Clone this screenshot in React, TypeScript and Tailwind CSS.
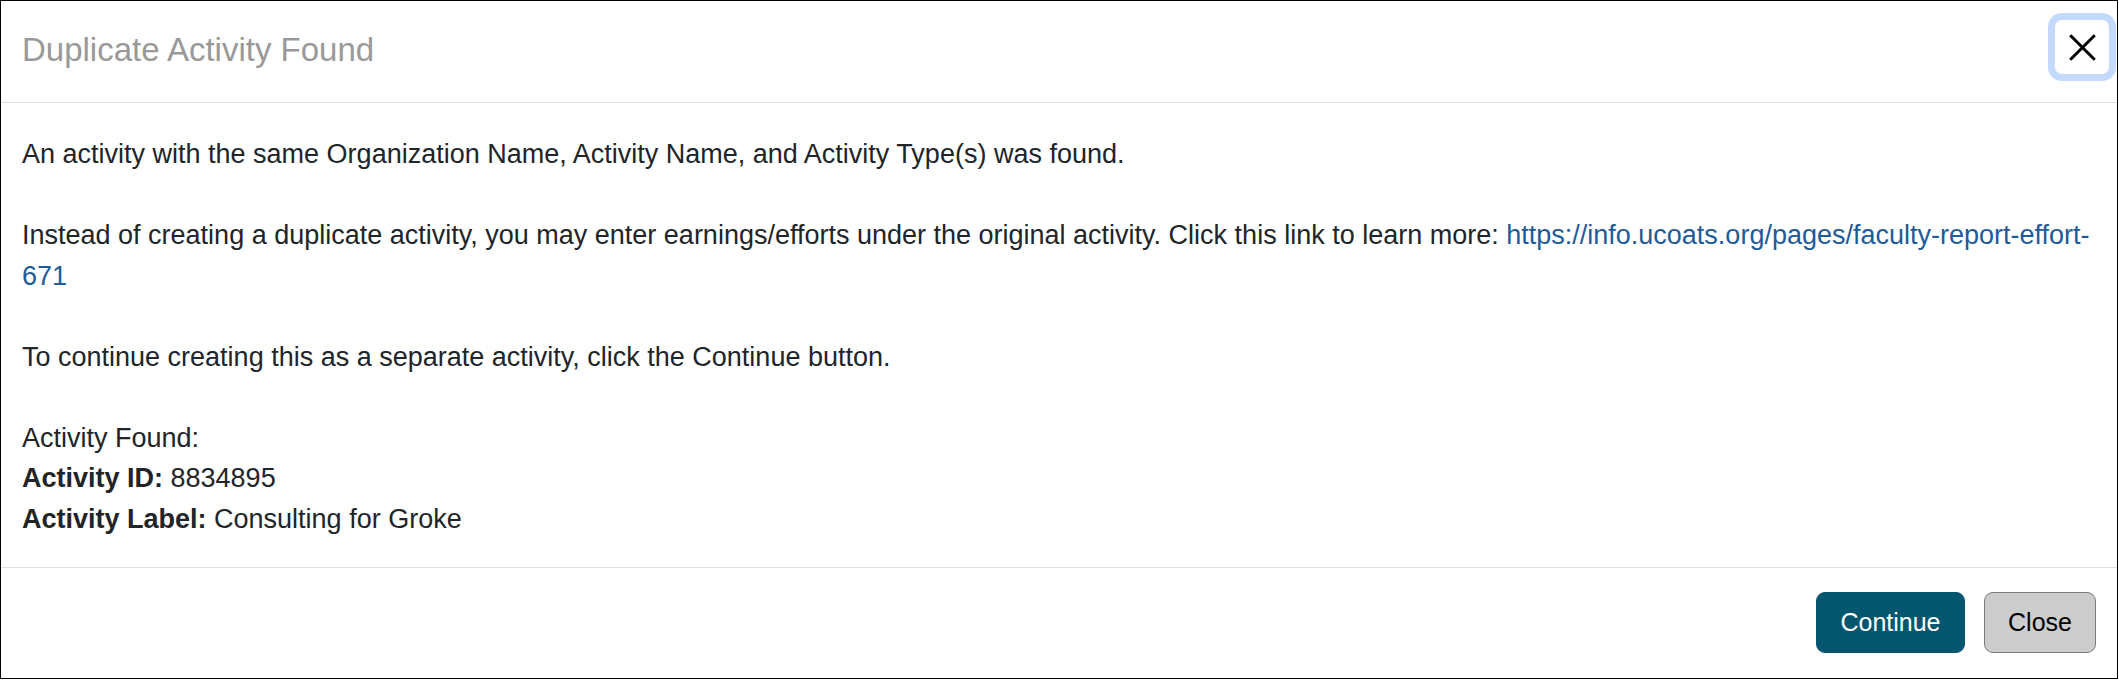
export default function App() {
    return (
        <div className="w-[2118px] h-[679px] bg-white border border-black flex flex-col font-['Liberation_Sans',Arial,sans-serif] text-[#212529]">

            {/* HEADER */}
            <div className="h-[102px] shrink-0 flex items-start justify-between border-b border-[#dee2e6] pl-[21px] pr-[8px]">
                <h5 className="pt-[29px] text-[33px] leading-[1.2] text-[#999999] font-normal">
                    Duplicate Activity Found
                </h5>
                <button className="mt-[19px] w-[54px] h-[54px] rounded-[7px] shadow-[0_0_0_7px_#c3dafe] flex items-center justify-center text-black">
                    <svg width="27" height="27" viewBox="0 0 24 24" fill="none" stroke="currentColor" strokeWidth="2.6" strokeLinecap="square">
                        <path d="M2 2L22 22M22 2L2 22" />
                    </svg>
                </button>
            </div>

            {/* BODY */}
            <div className="flex-1 pl-[21px] pr-[21px] pt-[31px] pb-[28px] text-[27px] leading-[1.5]">
                <p>An activity with the same Organization Name, Activity Name, and Activity Type(s) was found.</p>
                <p className="mt-[40.5px]">
                    Instead of creating a duplicate activity, you may enter earnings/efforts under the original activity. Click this link to learn more:{" "}
                    <a href="#" className="text-[#1f5b99]">https://info.ucoats.org/pages/faculty-report-effort-671</a>
                </p>
                <p className="mt-[40.5px]">To continue creating this as a separate activity, click the Continue button.</p>
                <div className="mt-[40.5px]">
                    <p>Activity Found:</p>
                    <p><b>Activity ID:</b> 8834895</p>
                    <p><b>Activity Label:</b> Consulting for Groke</p>
                </div>
            </div>

            {/* FOOTER */}
            <div className="h-[111px] shrink-0 border-t border-[#dee2e6] flex items-start justify-end gap-[19px] pt-[24px] pr-[21px]">
                <button className="w-[149px] h-[61px] rounded-[9px] bg-[#04566e] border border-[#04566e] text-white text-[25px] flex items-center justify-center">
                    Continue
                </button>
                <button className="w-[112px] h-[61px] rounded-[9px] bg-[#cccccc] border border-[#7a7a7a] text-black text-[25px] flex items-center justify-center">
                    Close
                </button>
            </div>
        </div>
    );
}
